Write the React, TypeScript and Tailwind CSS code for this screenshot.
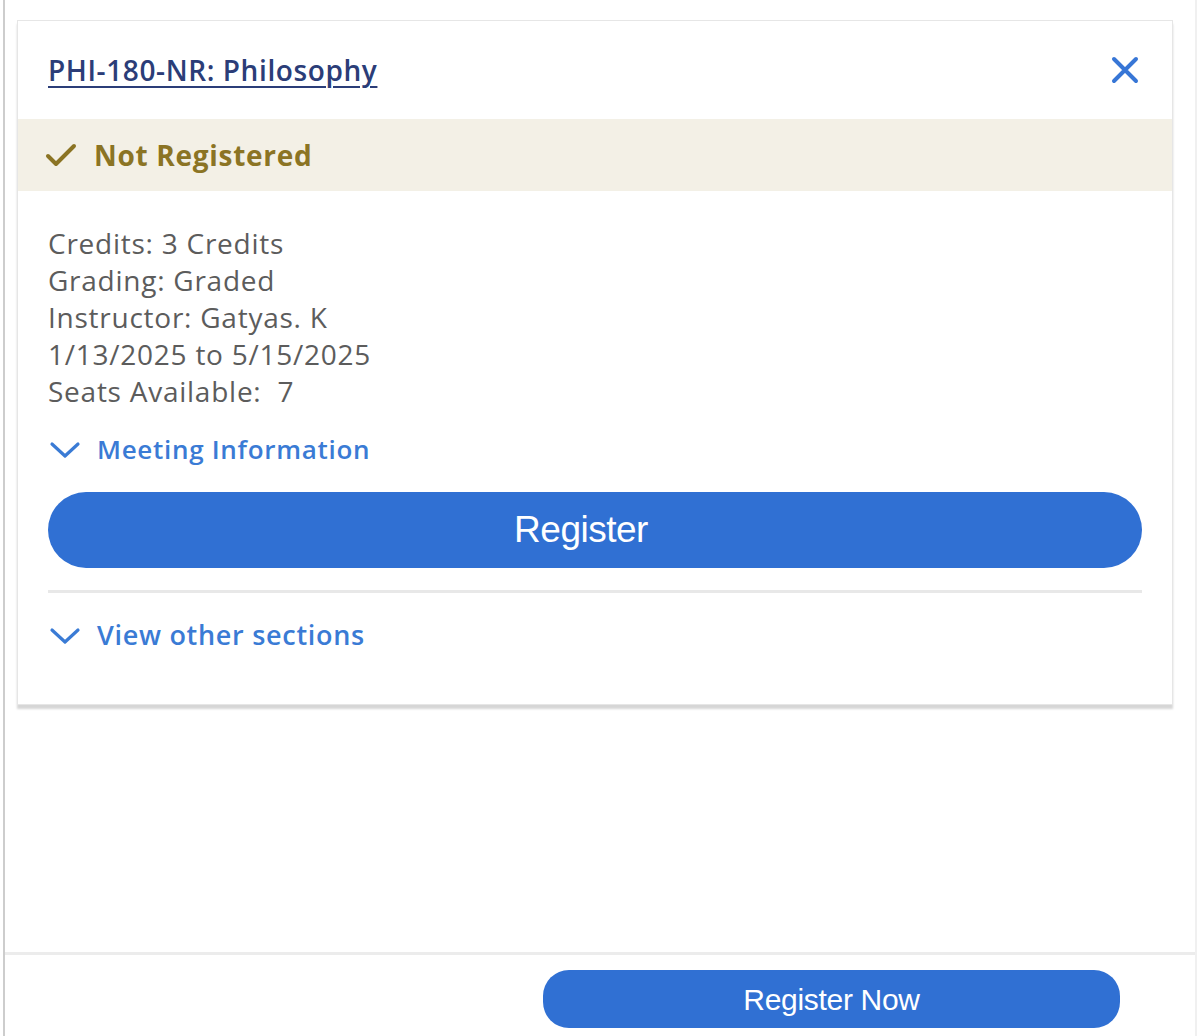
import React from "react";

function Chevron() {
  return (
    <svg width="32" height="20" viewBox="0 0 32 20" className="shrink-0">
      <path d="M3 4 L16 16 L29 4" fill="none" stroke="#3a7bd5" strokeWidth="3.2" strokeLinecap="round" strokeLinejoin="round" />
    </svg>
  );
}

export default function App() {
  const sans = { fontFamily: '"Open Sans", "Noto Sans", sans-serif' };
  return (
    <div className="w-[1200px] h-[1036px] bg-white pl-[3px] pr-[3px] flex">
      <div className="flex-1 flex flex-col border-l-2 border-[#cdcdcd] border-r-2 border-r-[#f0f0f0]">
        <div className="flex-1 pt-[20px] pl-[12px] pr-[22px]">
          <div className="border border-[#e6e6e6] bg-white shadow-[0_4px_2px_rgba(0,0,0,0.16)]" style={sans}>
            <div className="h-[98px] flex items-center justify-between pl-[30px] pr-[33px]">
              <span className="text-[28px] font-semibold text-[#2b3d78] underline underline-offset-[5px] decoration-[2px] tracking-[0.6px]">
                PHI-180-NR: Philosophy
              </span>
              <svg width="28" height="28" viewBox="0 0 28 28">
                <path d="M3 3 L25 25 M25 3 L3 25" stroke="#3776d6" strokeWidth="4" strokeLinecap="round" />
              </svg>
            </div>
            <div className="h-[72px] bg-[#f3f0e6] flex items-center pl-[27px] gap-[17px]">
              <svg width="32" height="26" viewBox="0 0 32 26">
                <path d="M3 14 L11 22 L29 4" fill="none" stroke="#8b7424" strokeWidth="4" strokeLinecap="round" strokeLinejoin="round" />
              </svg>
              <span className="text-[28px] font-bold text-[#8b7424] tracking-[0.7px]">Not Registered</span>
            </div>
            <div className="pt-[34px] pl-[30px] pr-[30px] pb-[50px]">
              <div className="text-[28px] leading-[37px] text-[#5c5c5c] tracking-[0.75px]">
                <div>Credits: 3 Credits</div>
                <div>Grading: Graded</div>
                <div>Instructor: Gatyas. K</div>
                <div>1/13/2025 to 5/15/2025</div>
                <div className="whitespace-pre">Seats Available:  7</div>
              </div>
              <div className="mt-[21px] h-[37px] flex items-center gap-[16px] pl-[1px]">
                <Chevron />
                <span className="text-[26px] font-semibold text-[#3a7bd5] tracking-[0.7px]">Meeting Information</span>
              </div>
              <button
                className="mt-[24px] w-full h-[76px] rounded-full bg-[#3070d3] text-white text-[37px] tracking-[-0.5px] flex items-center justify-center pr-[28px]"
                style={{ fontFamily: '"Liberation Sans", Arial, sans-serif' }}
              >
                Register
              </button>
              <div className="mt-[22px] h-[3px] bg-[#e8e8e8]" />
              <div className="mt-[24px] h-[37px] flex items-center gap-[16px] pl-[1px]">
                <Chevron />
                <span className="text-[27px] font-semibold text-[#3a7bd5] tracking-[0.7px]">View other sections</span>
              </div>
            </div>
          </div>
        </div>
        <div className="h-[84px] border-t-[3px] border-[#ececec] flex justify-end items-start pt-[15px] pr-[75px]">
          <button
            className="w-[577px] h-[58px] rounded-[26px] bg-[#3070d3] text-white text-[30px] tracking-[-0.3px] flex items-center justify-center"
            style={{ fontFamily: '"Liberation Sans", Arial, sans-serif' }}
          >
            Register Now
          </button>
        </div>
      </div>
    </div>
  );
}
